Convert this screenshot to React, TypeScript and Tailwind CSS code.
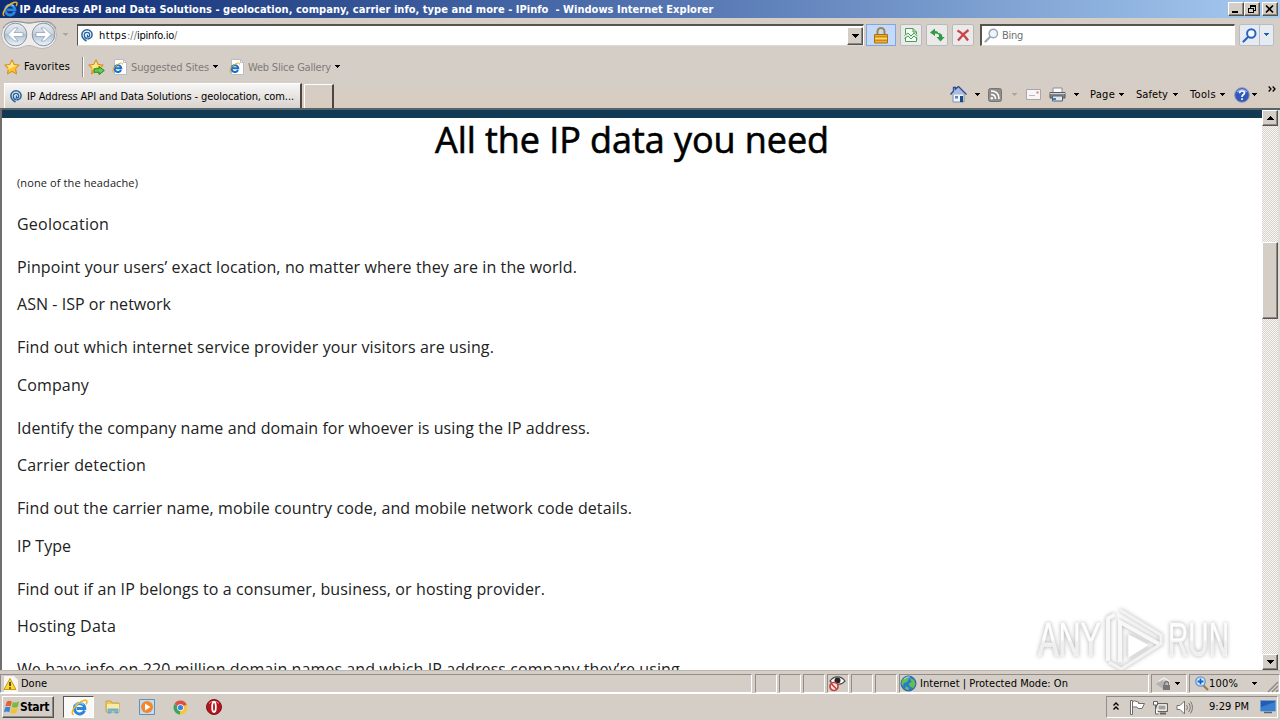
import { useLayoutEffect, useRef, useState } from "react";
import type { ReactNode } from "react";

/* Spreads its letters so that a label takes up exactly `w` pixels. */
function Label({ w, className = "", children }: { w: number; className?: string; children: string }) {
  const ref = useRef<HTMLSpanElement>(null);
  const [gap, setGap] = useState(0);
  useLayoutEffect(() => {
    if (ref.current) {
      setGap((w - ref.current.getBoundingClientRect().width) / children.length);
    }
  }, []);
  return (
    <span ref={ref} className={"inline-block shrink-0 whitespace-pre " + className} style={{ letterSpacing: gap + "px" }}>
      {children}
    </span>
  );
}

function Caret({ className = "" }: { className?: string }) {
  return (
    <svg className={"shrink-0 " + className} width="7" height="4" viewBox="0 0 7 4" shapeRendering="crispEdges">
      <path d="M1 0h5v1H5v1H4v1H3V2H2V1H1z" fill="currentColor" />
    </svg>
  );
}

function BigCaret({ className = "" }: { className?: string }) {
  return (
    <svg className={"shrink-0 " + className} width="7" height="4" viewBox="0 0 7 4" shapeRendering="crispEdges">
      <path d="M0 0h7v1H6v1H5v1H4v1H3V3H2V2H1V1H0z" fill="currentColor" />
    </svg>
  );
}

function IeLogo({ size = 16 }: { size?: number }) {
  return (
    <svg className="shrink-0" width={size} height={size} viewBox="0 0 16 16" fill="none">
      <path d="M12.700 10.800A4.900 4.900 0 1 1 13 8.900H5.200" stroke="#2b86dc" strokeWidth="2.800" />
      <path d="M3.800 6.500A4.800 4.800 0 0 1 11.800 5.300" stroke="#7dcbf8" strokeWidth="1.400" />
      <path d="M2.400 14.800C-.2 13.800 1.700 8.600 6.200 4.800C10 1.500 14.600.1 15 2.100c.2.800-.2 1.800-.9 2.900" stroke="#f0b51e" strokeWidth="1.400" />
    </svg>
  );
}

function IePage() {
  return (
    <svg className="shrink-0" width="16" height="16" viewBox="0 0 16 16" fill="none">
      <path d="M2.500.5h9l3 3v12h-12z" fill="#fff" stroke="#b9bcc4" />
      <path d="M11.500.5v3h3" stroke="#b9bcc4" />
      <path d="M9 11A3.400 3.400 0 1 1 9.300 9.300H3.500" stroke="#1b6fc4" strokeWidth="2" />
      <path d="M1.500 13.500C-.2 12.500 1.500 8.500 5 6c3-2.300 6-2.800 5.500-.5" stroke="#e5a91c" />
    </svg>
  );
}

function IpinfoMark() {
  return (
    <svg className="shrink-0" width="12" height="13" viewBox="0 0 12 13" fill="none" stroke="#2463a0" strokeWidth="1.500">
      <path d="M5.500 12C2.500 10.500.9 8.300.9 5.600a5 4.700 0 0 1 10.200 0c0 2.600-2.100 4.300-4.600 4.300" />
      <path d="M6.300 9.900C4.300 9.500 3.300 7.800 3.300 6A2.700 2.700 0 0 1 8.700 6c0 1.300-1 2-2.300 2V5.500" strokeWidth="1.300" />
    </svg>
  );
}

function Star({ arrow = false }: { arrow?: boolean }) {
  return (
    <svg className="shrink-0" width="17" height="16" viewBox="0 0 17 16">
      <path d="M8 .8l2.200 4.700 5.100.6-3.700 3.600.9 5.200L8 12.400l-4.500 2.500.9-5.200L.7 6.100l5.100-.6z" fill="#fcc232" stroke="#d58a1a" />
      <path d="M8 2.500l1.500 3.700 3.500.4-4 1.500-5 3 .8-3L2.500 6.600l3.800-.5z" fill="#ffe98c" />
      {arrow && <path d="M6 9.800h5V7.500l5.300 4-5.300 4v-2.300H6z" fill="#66cf48" stroke="#23852b" />}
    </svg>
  );
}

function NavButtons() {
  return (
    <svg className="shrink-0" width="58" height="30" viewBox="0 0 58 30">
      <defs>
        <linearGradient id="orb" x1="0" y1="0" x2="0" y2="1">
          <stop offset="0" stopColor="#e8edf2" />
          <stop offset=".45" stopColor="#ccd5df" />
          <stop offset=".5" stopColor="#b0bfd0" />
          <stop offset="1" stopColor="#edf6fc" />
        </linearGradient>
      </defs>
      <path d="M15 1.500C22 1.500 24 3 29 3s7-1.500 14-1.500a13.500 13.500 0 0 1 0 27c-7 0-9-3-14-3s-7 3-14 3a13.500 13.500 0 0 1 0-27z" fill="#eeedec" stroke="#b9b7b6" />
      <path d="M3 8C7 1.500 14 1.500 17 1.500S24 3 29 3s7-1.500 14-1.500S53 3 56 9" fill="none" stroke="#8d8c90" />
      <circle cx="15.500" cy="14.500" r="11.300" fill="url(#orb)" stroke="#8794a6" />
      <circle cx="43.500" cy="14.500" r="11.300" fill="url(#orb)" stroke="#8794a6" />
      <path d="M8 14.500l6.500-6.500H18l-4 4.500h9v4h-9l4 4.500h-3.500z" fill="#fff" stroke="#93a4ba" strokeWidth=".8" />
      <path d="M51 14.500L44.500 8H41l4 4.500h-9v4h9L41 21h3.500z" fill="#fff" stroke="#93a4ba" strokeWidth=".8" />
    </svg>
  );
}

function ToolButton({ children }: { children: ReactNode }) {
  return (
    <div className="flex h-[22px] w-[22px] shrink-0 items-center justify-center rounded-[2px] border border-[#b6babf] bg-[#eceae9]">
      {children}
    </div>
  );
}

function Magnifier({ color, fill, width = 1.4 }: { color: string; fill: string; width?: number }) {
  return (
    <svg className="shrink-0" width="15" height="15" viewBox="0 0 15 15" fill="none">
      <path d="M1.500 13.500L6 9" stroke={color} strokeWidth="2.200" strokeLinecap="round" />
      <circle cx="9.300" cy="5.500" r="4.200" fill={fill} stroke={color} strokeWidth={width} />
    </svg>
  );
}

const RAISED = "border border-t-white border-l-white border-r-[#55524f] border-b-[#55524f] bg-[#d5cec7] shadow-[inset_-1px_-1px_0_#8d8883]";

function CaptionButton({ className = "", children }: { className?: string; children: ReactNode }) {
  return (
    <div className={"flex h-[14px] w-4 shrink-0 items-center justify-center " + RAISED + " " + className}>
      <svg width="12" height="10" viewBox="0 0 12 10" fill="none" stroke="#000" shapeRendering="crispEdges">
        {children}
      </svg>
    </div>
  );
}

function TitleBar() {
  return (
    <div className="flex h-[18px] shrink-0 items-center bg-linear-to-r from-[#0f2b73] via-[#5879b4] via-55% to-[#a6caf0] pl-0.5 text-white">
      <IeLogo size={16} />
      <Label w={694} className="mt-px ml-[1.500px] font-bold">
        IP Address API and Data Solutions - geolocation, company, carrier info, type and more - IPinfo  - Windows Internet Explorer
      </Label>
      <div className="ml-auto flex pr-0.5">
        <CaptionButton>
          <path d="M2 8h6" strokeWidth="2" />
        </CaptionButton>
        <CaptionButton>
          <path d="M4 1h6M4 2.500h6M9.500 1v5M4.500 1v3M8 6h2" />
          <path d="M2 4.500h6M2.500 4v5M7.500 4v5M2 8.500h6" />
        </CaptionButton>
        <CaptionButton className="ml-0.5">
          <path d="M2 1.500l7 7M9 1.500l-7 7" strokeWidth="1.700" shapeRendering="auto" />
        </CaptionButton>
      </div>
    </div>
  );
}

function AddressBar() {
  return (
    <div className="flex h-[34px] shrink-0 items-center">
      <NavButtons />
      <Caret className="ml-1 text-[#a9a5a1]" />
      <div className="ml-2 flex h-[22px] w-[787px] shrink-0 items-center border border-t-2 border-t-[#57534f] border-l-[#57534f] border-r-white border-b-[#dedad5] bg-white pl-[3px]">
        <IpinfoMark />
        <div className="mt-px ml-1.5 flex">
          <Label w={28}>https</Label>
          <Label w={10} className="text-[#777]">://</Label>
          <Label w={37}>ipinfo.io</Label>
          <span className="text-[#777]">/</span>
        </div>
        <div className={"ml-auto flex h-[18px] w-4 items-center justify-center " + RAISED}>
          <BigCaret />
        </div>
      </div>
      <div className="ml-0.5 flex h-[22px] w-[30px] shrink-0 items-center justify-center border border-[#7fa5e2] bg-[#c5daf8]">
        <svg width="14" height="17" viewBox="0 0 14 17" fill="none">
          <path d="M3.500 8V4.500a3.500 3.500 0 0 1 7 0V8" stroke="#a08548" strokeWidth="2" />
          <path d="M.5 7.500h13v8.500H.5z" fill="#eeb02c" stroke="#a4721a" />
          <path d="M1 9.500h12M1 13.500h12" stroke="#c98a18" />
          <path d="M1 11.500h12" stroke="#ffd873" />
        </svg>
      </div>
      <div className="ml-1 flex gap-1">
        <ToolButton>
          <svg width="14" height="16" viewBox="0 0 14 16" fill="none" stroke="#46a056">
            <path d="M1.500 7V1.500h7.500l3.500 3.500v2M9 1.500V5h3.500M1.500 10v4.500h11V10" fill="#f4fff4" />
            <path d="M.5 8.500L4 6l3 3 3-3 3.500 3M.5 11.500L4 9l3 3 3-3 3.500 3" />
          </svg>
        </ToolButton>
        <ToolButton>
          <svg width="16" height="14" viewBox="0 0 16 14" fill="#2f9a48">
            <path d="M1 4.500L6 .5V3c2.500 0 3.500 1 3.500 3.500C8.500 5.700 7.500 5.500 6 5.500V8z" />
            <path d="M11.500 13.500L7.500 9H10c.2-2-.5-3-1.500-4C12 5 13.500 6.500 13.300 9h2.400z" />
          </svg>
        </ToolButton>
        <ToolButton>
          <svg width="14" height="13" viewBox="0 0 14 13" fill="none">
            <path d="M1.500 1.500c4.500 2.500 7.500 5.500 10.500 10M12.500 1C8 4 5 7.500 2 11.500" stroke="#c9444c" strokeWidth="2.300" />
          </svg>
        </ToolButton>
      </div>
      <div className="ml-1.5 flex h-[22px] w-[255px] shrink-0 items-center border border-t-2 border-l-2 border-t-[#57534f] border-l-[#57534f] border-r-white border-b-[#dedad5] bg-white pl-0.5 text-[#707070]">
        <Magnifier color="#9aa5b4" fill="#edf4fb" />
        <Label w={21} className="mt-px ml-[3px]">Bing</Label>
      </div>
      <div className="ml-1 flex h-[22px] w-[35px] shrink-0 items-center rounded-[2px] border border-[#b6bdca] bg-[#e6ebf2] pl-0.5">
        <Magnifier color="#2863c4" fill="#f4faff" width={2} />
        <div className="ml-0.5 flex h-5 items-center border-l border-[#b6bdca] pl-[3px]">
          <Caret className="text-[#1f5fae]" />
        </div>
      </div>
    </div>
  );
}

function FavoritesBar() {
  return (
    <div className="flex h-[30px] shrink-0 items-center pl-1">
      <Star />
      <Label w={46} className="ml-[3px]">Favorites</Label>
      <div className="mr-1 ml-3 h-5 w-0.5 border-l border-[#908b86] bg-white" />
      <Star arrow />
      <div className="ml-[7px] flex items-center text-[#807b77]">
        <IePage />
        <Label w={78} className="mt-px ml-[3px]">Suggested Sites</Label>
      </div>
      <Caret className="ml-[3px]" />
      <div className="ml-2.5 flex items-center text-[#807b77]">
        <IePage />
        <Label w={83} className="mt-px ml-[3px]">Web Slice Gallery</Label>
      </div>
      <Caret className="ml-[3px]" />
    </div>
  );
}

function CommandBar() {
  return (
    <div className="mb-px flex h-[25px] w-[326px] shrink-0 items-center">
      <svg className="shrink-0" width="17" height="17" viewBox="0 0 17 17">
        <path d="M3 8v8h11V8L8.500 3z" fill="#eef2fb" stroke="#8490b5" />
        <path d="M.5 8.500L3.500 5V1.500h2V3l3-2.500 8 8" fill="#a9bce0" stroke="#2b4b8e" strokeWidth="1.300" />
        <path d="M10 10h3v6h-3z" fill="#1c4a7e" />
        <path d="M5 10h3v2.500H5z" fill="#5a86bd" />
      </svg>
      <Caret className="ml-[7px]" />
      <svg className="ml-[7px] shrink-0" width="14" height="14" viewBox="0 0 14 14" fill="none">
        <rect x=".5" y=".5" width="13" height="13" rx="2" fill="#918e8c" stroke="#777472" />
        <path d="M3 3c5 0 8 3 8 8M3 6.500c3 0 4.500 1.500 4.500 4.500" stroke="#fff" strokeWidth="1.600" />
        <circle cx="3.800" cy="10.200" r="1.300" fill="#fff" />
      </svg>
      <Caret className="ml-[9px] text-[#aaa5a0]" />
      <svg className="ml-2 shrink-0" width="15" height="12" viewBox="0 0 15 12" fill="none">
        <path d="M.5.5h14v10H.5z" fill="#f7f5f6" stroke="#aaa5aa" />
        <path d="M10.500 2.500h2v2h-2z" fill="#d27e86" />
        <path d="M3 6.500h6" stroke="#bab7be" />
      </svg>
      <svg className="ml-2 shrink-0" width="17" height="15" viewBox="0 0 17 15">
        <path d="M4 1h9v5H4z" fill="#fcfcfc" stroke="#8c8f96" />
        <path d="M1 5.500h15v5.500H1z" fill="#81868e" stroke="#555a62" />
        <path d="M3.500 9h10v5h-10z" fill="#dce9f5" stroke="#5b6068" />
        <path d="M4 11h3v2H4z" fill="#3c83bc" />
        <path d="M1 6.500h15" stroke="#d0d4da" />
      </svg>
      <Caret className="ml-[7px]" />
      <Label w={25} className="ml-2.5">Page</Label>
      <Caret className="ml-[3px]" />
      <Label w={32} className="ml-[11px]">Safety</Label>
      <Caret className="ml-1" />
      <Label w={26} className="ml-[11px]">Tools</Label>
      <Caret className="ml-[3px]" />
      <svg className="ml-2 shrink-0" width="16" height="16" viewBox="0 0 16 16" fill="none">
        <circle cx="8" cy="8" r="7.300" fill="#3159bb" stroke="#8b96bb" />
        <path d="M3 5a6 5 0 0 1 10 0" stroke="#8fb0f0" strokeWidth="1.500" />
        <path d="M5.600 6.200c0-3 5-2.800 4.900-.2C10.400 7.700 8 7.500 8 10M8 11.200v1.700" stroke="#fff" strokeWidth="1.700" />
      </svg>
      <Caret className="ml-px" />
      <svg className="mb-3 ml-auto shrink-0" width="8" height="6" viewBox="0 0 8 6" fill="none" stroke="#000" strokeWidth="1.300">
        <path d="M.7.500L3 3 .7 5.500M4.700.500L7 3 4.700 5.500" />
      </svg>
    </div>
  );
}

function TabRow() {
  return (
    <div className="flex h-[26px] shrink-0 items-end bg-linear-to-b from-[#d5cec7] to-[#d8ccbf] pl-1">
      <div className="flex h-[25px] w-[298px] shrink-0 items-center border-t border-r-2 border-l border-t-white border-l-white border-r-[#4b4642] bg-linear-to-b from-[#f7f6f6] to-[#d9d3cd] pl-[5px]">
        <IpinfoMark />
        <Label w={267} className="mt-px ml-[5px]">IP Address API and Data Solutions - geolocation, com...</Label>
      </div>
      <div className="ml-0.5 h-6 w-[30px] shrink-0 border-t border-r-2 border-l border-t-white border-l-white border-r-[#4b4642]" />
      <div className="mr-1 ml-auto flex">
        <CommandBar />
      </div>
    </div>
  );
}

function ScrollBar() {
  return (
    <div className="flex w-4 shrink-0 flex-col bg-[repeating-conic-gradient(#d8d1cb_0_25%,#f8f7f6_0_50%)] bg-size-[2px_2px]">
      <div className={"flex h-4 shrink-0 items-center justify-center " + RAISED}>
        <BigCaret className="rotate-180" />
      </div>
      <div className={"mt-[116px] h-[77px] shrink-0 " + RAISED} />
      <div className={"mt-auto flex h-4 shrink-0 items-center justify-center " + RAISED}>
        <BigCaret />
      </div>
    </div>
  );
}

const features = [
  { name: "Geolocation", nw: 92, text: "Pinpoint your users’ exact location, no matter where they are in the world.", tw: 560 },
  { name: "ASN - ISP or network", nw: 154, text: "Find out which internet service provider your visitors are using.", tw: 477 },
  { name: "Company", nw: 72, text: "Identify the company name and domain for whoever is using the IP address.", tw: 573 },
  { name: "Carrier detection", nw: 129, text: "Find out the carrier name, mobile country code, and mobile network code details.", tw: 615 },
  { name: "IP Type", nw: 54, text: "Find out if an IP belongs to a consumer, business, or hosting provider.", tw: 528 },
  { name: "Hosting Data", nw: 99, text: "We have info on 220 million domain names and which IP address company they’re using.", tw: 667 },
];

function Watermark() {
  return (
    <svg className="absolute top-[498px] right-[22px] drop-shadow-[0_0_2px_#aaa]" width="206" height="64" viewBox="0 0 206 64" fill="none">
      <defs>
        <linearGradient id="mark" x1="0" y1="0" x2="0" y2="1">
          <stop offset=".5" stopColor="#fefefe" />
          <stop offset=".55" stopColor="#efefef" />
        </linearGradient>
      </defs>
      <g fill="url(#mark)" stroke="#fafafa" strokeWidth=".6" fontFamily="'Liberation Sans', sans-serif" fontSize="48">
        <text x="4" y="48" textLength="63" lengthAdjust="spacingAndGlyphs">ANY</text>
        <text x="134" y="48" textLength="61" lengthAdjust="spacingAndGlyphs">RUN</text>
      </g>
      <path d="M74 53V10.500l7-4M86 54V14l39 22" stroke="#f8f8f8" strokeWidth="4" />
      <path d="M86 2l41 25v9L87 61l-12-7" stroke="#f3f3f3" strokeWidth="3" />
      <path d="M94 26v24l21-13z" fill="#fff" stroke="#ececec" />
    </svg>
  );
}

function WebPage() {
  return (
    <div className="flex h-[562px] shrink-0 border-t-2 border-l-2 border-t-[#54636b] border-l-[#716e6c]">
      <div className="relative flex min-w-0 flex-1 flex-col overflow-hidden bg-white font-['Open_Sans','Noto_Sans',sans-serif] text-base leading-6 text-[#222]">
        <div className="h-2 shrink-0 bg-[#123a55]" />
        <h2 className="mt-[-3px] flex h-[49px] shrink-0 items-center justify-center text-[36px] leading-[49px] font-medium text-black [-webkit-text-stroke:0.6px_#000]">
          <Label w={394}>All the IP data you need</Label>
        </h2>
        <div className="mt-[9px] flex h-5 shrink-0 items-center pl-[15px] text-[11px] leading-5">
          <Label w={121}>(none of the headache)</Label>
        </div>
        <div className="mt-[19px] flex flex-col gap-[13.4px] pl-[15px]">
          {features.map((f) => (
            <div key={f.name} className="flex h-[67px] shrink-0 flex-col items-start gap-[19px]">
              <Label w={f.nw}>{f.name}</Label>
              <Label w={f.tw}>{f.text}</Label>
            </div>
          ))}
        </div>
        <Watermark />
      </div>
      <ScrollBar />
      <div className="w-0.5 shrink-0 bg-[#e2dcd6]" />
    </div>
  );
}

const SUNKEN = "shrink-0 border border-t-[#928d88] border-l-[#928d88] border-r-white border-b-white";

function StatusBar() {
  return (
    <div className="flex h-[23px] shrink-0 items-end gap-0.5 border-t border-[#bdb7b1]">
      <div className={"flex h-[19px] w-[752px] items-center pl-0.5 " + SUNKEN}>
        <svg width="15" height="16" viewBox="0 0 15 16">
          <path d="M1 0h10l4 4v12H1z" fill="#f6f5f3" />
          <path d="M7 2.500L13 13.500H1z" fill="#ffd82c" stroke="#c79a15" />
          <path d="M7 6v4M7 11.200v1.500" stroke="#222" strokeWidth="1.500" />
        </svg>
        <Label w={26} className="ml-[3px]">Done</Label>
      </div>
      <div className={"ml-px h-[19px] w-[22px] " + SUNKEN} />
      <div className={"h-[19px] w-[22px] " + SUNKEN} />
      <div className={"h-[19px] w-[22px] " + SUNKEN} />
      <div className={"flex h-[19px] w-[22px] items-center " + SUNKEN}>
        <svg className="shrink-0" width="18" height="17" viewBox="0 0 18 17" fill="none">
          <path d="M2 6c4-5.500 11-5.500 15 0-4 4.500-11 4.500-15 0z" fill="#fff" stroke="#4e4a4a" strokeWidth="1.200" />
          <circle cx="9.500" cy="5.500" r="3" fill="#252525" />
          <circle cx="6" cy="11.500" r="4" fill="#fbe5e3" stroke="#c3423c" strokeWidth="1.700" />
          <path d="M3.500 9l5 5" stroke="#c3423c" strokeWidth="1.700" />
        </svg>
      </div>
      <div className={"h-[19px] w-[22px] " + SUNKEN} />
      <div className={"h-[19px] w-[22px] " + SUNKEN} />
      <div className={"flex h-[19px] w-[250px] items-center " + SUNKEN}>
        <svg className="shrink-0" width="17" height="17" viewBox="0 0 17 17">
          <circle cx="8.500" cy="8.500" r="7.500" fill="#267bd0" stroke="#285f9d" />
          <path d="M3 4l4-2 2 2-2 3-3 1-1 3C.500 8.500 1.500 6 3 4zM10 3l4 2 1.500 4-2 4-3-1-2-3 3-2zM6 11l3 2-1 2.500-3-2z" fill="#65bf4e" />
          <path d="M4 4a6 5 0 0 1 6-2" stroke="#b8e5ff" fill="none" />
        </svg>
        <Label w={148} className="ml-[3px]">Internet | Protected Mode: On</Label>
      </div>
      <div className={"flex h-[19px] w-9 items-center pl-[3px] " + SUNKEN}>
        <svg className="shrink-0" width="16" height="16" viewBox="0 0 16 16">
          <path d="M1 8l7-5v3h4v4H8v3z" fill="#b6b2af" />
          <path d="M4 5l5-3 5 3v5" fill="none" stroke="#eee" strokeWidth="1.500" />
          <path d="M8 9h7v5H8z" fill="#77757a" />
          <path d="M9.500 9V7.500a2 2 0 0 1 4 0V9" fill="none" stroke="#77757a" strokeWidth="1.300" />
        </svg>
        <Caret className="ml-[3px]" />
      </div>
      <div className={"flex h-[19px] w-[91px] items-center pl-[5px] " + SUNKEN}>
        <svg className="shrink-0" width="14" height="15" viewBox="0 0 14 15" fill="none">
          <path d="M8 9l5 5" stroke="#a47a42" strokeWidth="2.200" />
          <circle cx="5.500" cy="5.500" r="4.700" fill="#dceeff" stroke="#5b96cf" strokeWidth="1.300" />
          <path d="M5.500 2.500v6M2.500 5.500h6" stroke="#1664c0" strokeWidth="1.800" />
        </svg>
        <Label w={29}>100%</Label>
        <Caret className="ml-[13px]" />
        <svg className="mt-1 ml-auto shrink-0" width="14" height="14" viewBox="0 0 14 14" stroke="#908a85" strokeWidth="1.500">
          <path d="M3 13L13 3M7 13l6-6M11 13l2-2" />
        </svg>
      </div>
    </div>
  );
}

function Taskbar() {
  return (
    <div className="flex h-[27px] shrink-0 items-center border-t border-white">
      <div className={"ml-0.5 flex h-[22px] w-[52px] shrink-0 items-center " + RAISED}>
        <svg className="ml-px shrink-0" width="16" height="16" viewBox="0 0 15 15">
          <path d="M2.500 2.500C4.500 1 6 1.500 7.300 2.300L6.300 7C5 6 3 6 1.300 7z" fill="#e8602c" />
          <path d="M8.200 2.700c2 1 4 .8 6-.5l-1.200 5c-2 1-4 1.300-5.800.3z" fill="#7cba3d" />
          <path d="M1 8c2-1 3.700-1 5 0L5 12.500c-1.500-1-3.300-1-5 0z" fill="#3b84d4" />
          <path d="M7 8.500c2 1 4 .8 6-.5l-1.300 5c-2 1-4 1-5.700 0z" fill="#f2c32f" />
        </svg>
        <Label w={29} className="text-xs font-bold">Start</Label>
      </div>
      <div className="ml-[9px] flex h-[22px] w-[31px] shrink-0 items-center justify-center border border-t-[#5c5854] border-l-[#5c5854] border-r-white border-b-white bg-[#faf9f8] pl-0.5">
        <IeLogo size={17} />
      </div>
      <svg className="ml-[11px] shrink-0" width="16" height="16" viewBox="0 0 16 16">
        <path d="M1 2h5l1 2h7v9H1z" fill="#ecc860" stroke="#c9a24a" />
        <path d="M2 5h12v8H2z" fill="#fbe9a6" />
        <path d="M3 14v-4h10v4h-3v-2H6v2z" fill="#79bddd" stroke="#4f9cc3" strokeWidth=".7" />
      </svg>
      <svg className="ml-[18px] shrink-0" width="16" height="16" viewBox="0 0 16 16">
        <path d="M.500.500h15v15H.500z" fill="#c3def3" stroke="#5c91bd" />
        <circle cx="8" cy="8" r="6" fill="#f3872b" />
        <path d="M6 4.500l5.500 3.500L6 11.500z" fill="#fff" />
      </svg>
      <svg className="ml-[18px] shrink-0" width="15" height="15" viewBox="0 0 16 16">
        <path d="M8 8L1.500 4.300A7.500 7.500 0 0 1 14.800 5z" fill="#dd4f40" />
        <path d="M8 8L1.500 4.300A7.500 7.500 0 0 0 7.500 15.500z" fill="#40a35c" />
        <path d="M8 8l6.800-3A7.500 7.500 0 0 1 7.500 15.500z" fill="#f6c63a" />
        <circle cx="8" cy="8" r="3.600" fill="#fff" />
        <circle cx="8" cy="8" r="2.800" fill="#3f7fe0" />
      </svg>
      <svg className="ml-[18px] shrink-0" width="16" height="16" viewBox="0 0 16 16">
        <circle cx="8" cy="8" r="7.500" fill="#b5161e" stroke="#7c1219" />
        <path d="M3 4.500a6 5 0 0 1 10 0" fill="none" stroke="#e78a87" />
        <ellipse cx="8" cy="8" rx="1.800" ry="5" fill="#a0141b" stroke="#fff" strokeWidth="1.800" />
      </svg>
      <div className={"mr-0.5 ml-auto flex h-[22px] w-[172px] items-center pl-1.5 " + SUNKEN}>
        <svg className="mb-0.5 shrink-0" width="6" height="9" viewBox="0 0 6 9" fill="none" stroke="#000" strokeWidth="1.400">
          <path d="M.500 3.500L3 1l2.500 2.500M.500 7.500L3 5l2.500 2.500" />
        </svg>
        <svg className="ml-2.5 shrink-0" width="17" height="16" viewBox="0 0 17 16" stroke="#706c69">
          <path d="M3.500 2.500c3-1.500 4 .5 6 .5v1.500h6l-2.500 5H9l-1-1.500H3.500z" fill="#fff" />
          <path d="M1.500 1.500h2v14h-2z" fill="#fff" />
        </svg>
        <svg className="ml-1.5 shrink-0" width="16" height="15" viewBox="0 0 16 15" stroke="#66625f">
          <path d="M4.500 3.500h11v8h-11z" fill="#ccc8c5" />
          <path d="M6 5h8v5H6z" fill="#a39f9d" stroke="#fff" />
          <path d="M8 13.500h6" strokeWidth="2" />
          <path d="M1.500 1.500h4V5H1.500zM3.500 5v9h3" fill="#fff" />
        </svg>
        <svg className="ml-2 shrink-0" width="17" height="15" viewBox="0 0 17 15" fill="none" stroke="#77736f">
          <path d="M1 5.500h3L8.500 1v13L4 9.500H1z" fill="#fff" />
          <path d="M10.500 5c1.200 1.500 1.200 3.500 0 5M12.500 3c2.300 2.500 2.300 6.500 0 9M14.500 1.500c2.500 3.500 2.500 8.500 0 12" />
        </svg>
        <Label w={40} className="ml-4">9:29 PM</Label>
        <svg className="ml-[11px] shrink-0" width="16" height="14" viewBox="0 0 16 14">
          <path d="M.500.500h15v10.500H.500z" fill="#235cb0" stroke="#719fd2" />
          <path d="M1 7l14-5v8.500H1z" fill="#397ed1" />
          <path d="M4 12.500h8" stroke="#526575" strokeWidth="1.500" />
        </svg>
      </div>
    </div>
  );
}

export default function App() {
  return (
    <div className="flex h-[720px] w-[1280px] flex-col overflow-hidden bg-[#d5cec7] font-['DejaVu_Sans_Condensed','DejaVu_Sans','Noto_Sans',sans-serif] text-[11px] leading-[14px] text-black">
      <TitleBar />
      <AddressBar />
      <FavoritesBar />
      <TabRow />
      <WebPage />
      <StatusBar />
      <Taskbar />
    </div>
  );
}
